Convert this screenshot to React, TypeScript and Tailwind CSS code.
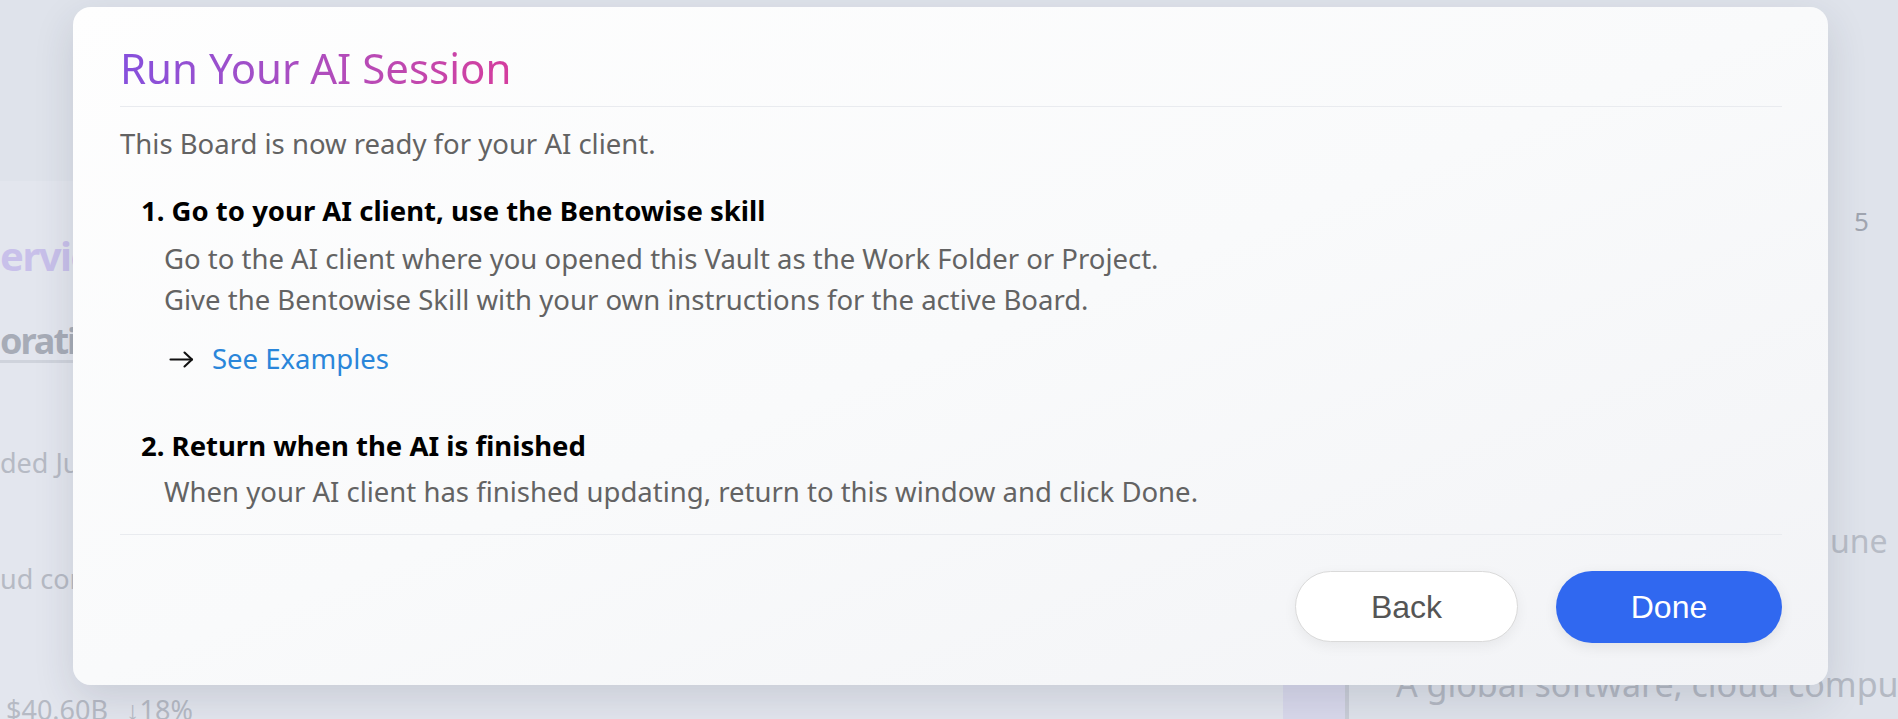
import React from "react";

function ArrowIcon() {
  return (
    <svg width="25" height="20" viewBox="0 0 25 20" fill="none" aria-hidden="true">
      <path d="M1.5 10.5H23" stroke="#111" strokeWidth="2.1" strokeLinecap="round" />
      <path d="M15.5 3.5L23 10.5L15.5 17.5" stroke="#111" strokeWidth="2.1" strokeLinecap="round" strokeLinejoin="round" />
    </svg>
  );
}

export default function App() {
  return (
    <div className="relative h-[719px] w-[1898px] overflow-hidden bg-[#dfe3eb] font-['Noto_Sans',sans-serif]">
      {/* background page (dimmed) */}
      <div className="flex h-full">
        <div className="flex w-[1283px] shrink-0 flex-col pt-[181px]">
          <div className="h-[13px] bg-[#dadbee]" />
          <div className="flex flex-1 flex-col bg-[#e3e6ee]">
            <div className="mt-[51px] whitespace-nowrap text-[40px] font-bold leading-[48px] tracking-[-1.5px] text-[#c8c0ea]">ervices</div>
            <div className="mt-[43px] whitespace-nowrap text-[36px] font-bold leading-[36px] tracking-[-2px] text-[#a7acb7]">orations</div>
            <div className="mt-[1px] h-[3px] bg-[#cfd3dc]" />
            <div className="mt-[80px] whitespace-nowrap text-[27px] leading-[40px] text-[#b6bac4]">ded June</div>
            <div className="mt-[76px] whitespace-nowrap text-[27px] leading-[40px] text-[#b6bac4]">ud computing</div>
            <div className="mt-[91px] flex gap-[18px] whitespace-nowrap pl-[6px] text-[27px] leading-[40px] text-[#b6bac4]">
              <span>$40.60B</span>
              <span>↓18%</span>
            </div>
          </div>
        </div>
        <div className="flex min-w-0 flex-1 overflow-hidden">
          <div className="mt-[500px] w-[62px] shrink-0 bg-[#d9d9ec]" />
          <div className="mt-[500px] w-[4px] shrink-0 bg-[#c9cdd7]" />
          <div className="flex min-w-0 flex-1 flex-col pl-[47px] pt-[204px]">
            <div className="ml-[458px] text-[26px] leading-[34px] text-[#a0a5b0]">5</div>
            <div className="ml-[434px] mt-[283px] text-[32px] leading-[40px] text-[#b7bcc6]">une</div>
            <div className="mt-[101px] whitespace-nowrap text-[34px] leading-[44px] text-[#b4b9c3]">A global software, cloud computing</div>
          </div>
        </div>
      </div>

      {/* modal */}
      <div className="absolute left-[73px] top-[7px] flex h-[678px] w-[1755px] flex-col rounded-[18px] bg-linear-to-br from-[#fefefe] via-[#f9fafb] to-[#f2f3f6] pl-[47px] pr-[46px] pt-[33px] shadow-[0_14px_40px_rgba(40,50,70,0.14)]">
        <h1 className="text-[42px] font-normal leading-[56px]">
          <span className="bg-linear-to-r from-[#8650dd] to-[#d43d9e] bg-clip-text text-transparent">
            Run Your AI Session
          </span>
        </h1>
        <div className="mt-[10px] h-px bg-[#e9ebef]" />
        <p className="mt-[16px] text-[27.5px] leading-[42px] text-[#636363]">This Board is now ready for your AI client.</p>

        <div className="ml-[21px] mt-[25px] flex flex-col">
          <h2 className="text-[27.5px] font-bold leading-[42px] text-black">1. Go to your AI client, use the Bentowise skill</h2>
          <div className="ml-[23px] mt-[6px] text-[27.5px] leading-[41px] text-[#636363]">
            <p>Go to the AI client where you opened this Vault as the Work Folder or Project.</p>
            <p>Give the Bentowise Skill with your own instructions for the active Board.</p>
          </div>
          <a className="ml-[28px] mt-[18px] flex items-center gap-[18px] text-[27.5px] leading-[41px] text-[#2a86da]">
            <ArrowIcon />
            <span>See Examples</span>
          </a>

          <h2 className="mt-[46px] text-[27.5px] font-bold leading-[42px] text-black">2. Return when the AI is finished</h2>
          <p className="ml-[23px] mt-[4px] text-[27.5px] leading-[41px] text-[#636363]">
            When your AI client has finished updating, return to this window and click Done.
          </p>
        </div>

        <div className="mt-[22px] h-px bg-[#e9ebef]" />

        <div className="mt-[36px] flex justify-end gap-[38px] font-['Liberation_Sans',Arial,sans-serif]">
          <button className="h-[71px] w-[223px] rounded-full border border-[#dadada] bg-white text-[32px] text-[#555555] shadow-[0_4px_14px_rgba(0,0,0,0.06)]">
            Back
          </button>
          <button className="h-[72px] w-[226px] rounded-full bg-[#3068f0] text-[32px] text-white shadow-[0_4px_14px_rgba(0,0,0,0.08)]">
            Done
          </button>
        </div>
      </div>
    </div>
  );
}
